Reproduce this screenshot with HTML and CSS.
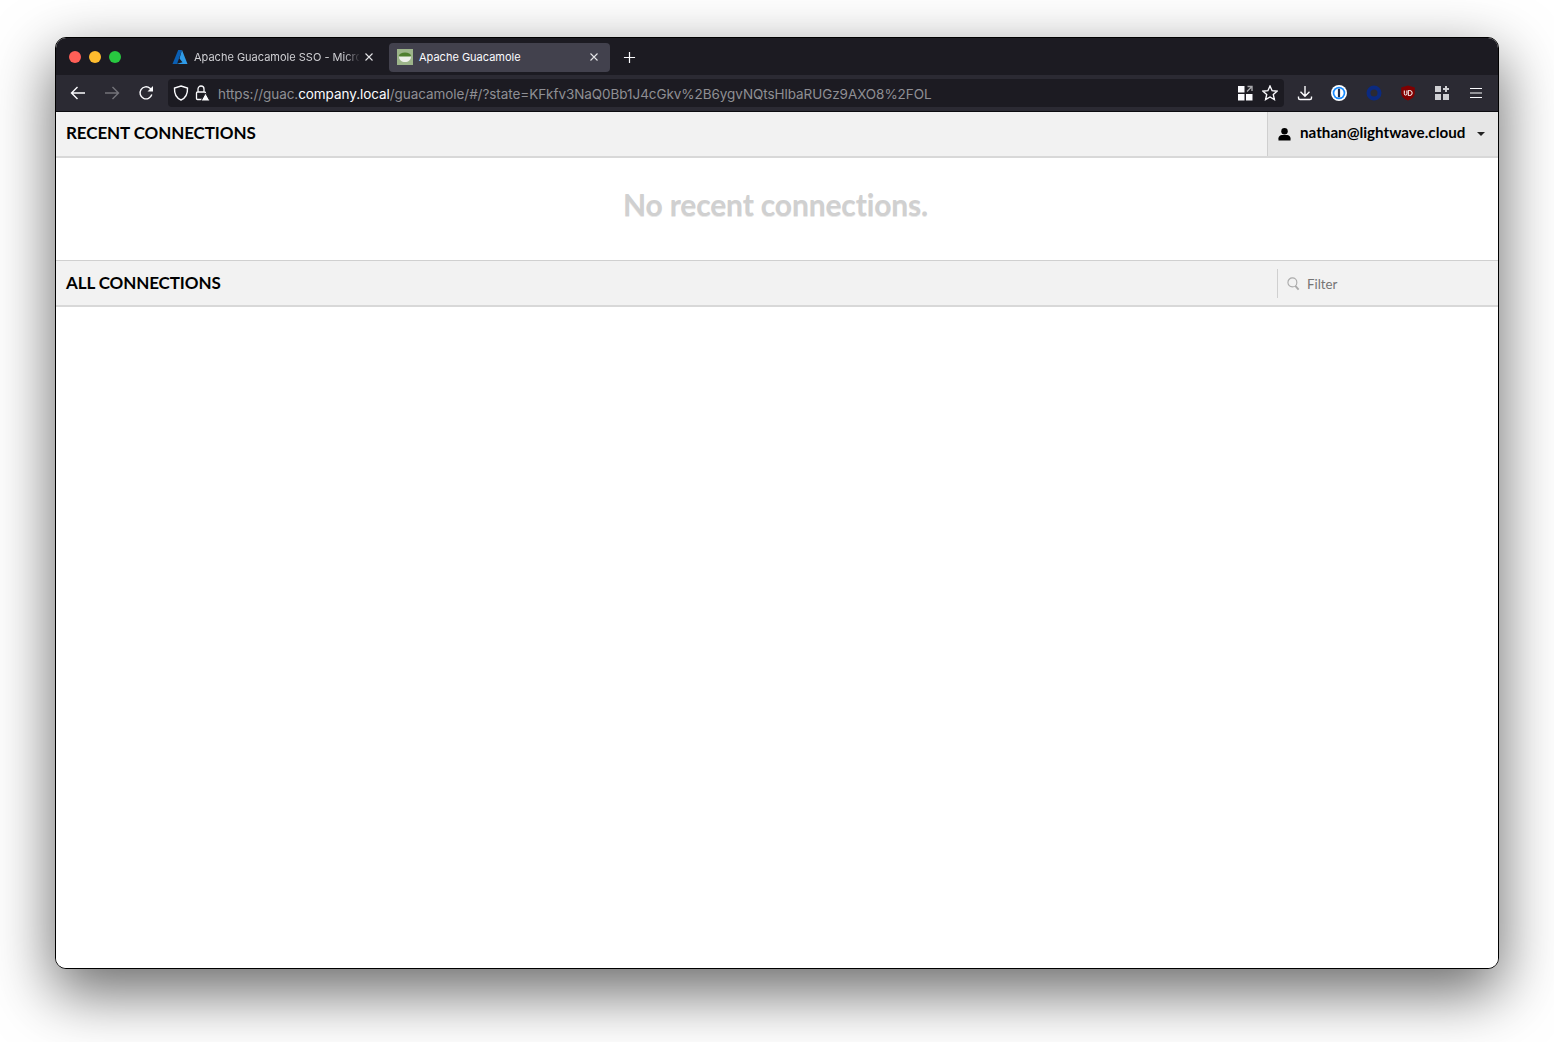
FILE: index.html
```html
<!DOCTYPE html>
<html lang="en">
<head>
<meta charset="utf-8">
<title>Apache Guacamole</title>
<link rel="stylesheet" href="styles.css">
</head>
<body>
<div class="window">
  <div class="tabbar">
    <div class="lights">
      <span class="light red"></span><span class="light yellow"></span><span class="light green"></span>
    </div>
    <div class="tab first">
      <svg class="favicon" viewBox="0 0 16 16"><path d="M6.200 1h3.800L5 15H.5z" fill="#0a5fb4"/><path d="M10 1 15.500 15H4.500l6-1.800-3-3.700z" fill="#2f9be8"/></svg>
      <span class="tab-title fade">Apache Guacamole SSO - Micro</span>
      <svg class="tab-close" viewBox="0 0 10 10"><path d="M1.500 1.500l7 7M8.500 1.500l-7 7"/></svg>
    </div>
    <div class="tab active">
      <svg class="favicon guac" viewBox="0 0 16 16"><rect width="16" height="16" fill="#9db58a"/><ellipse cx="8" cy="6.500" rx="6" ry="3" fill="#4f7f2e"/><path d="M2 7.500h12c0 3.600-2.600 5.500-6 5.500S2 11.100 2 7.500z" fill="#eef0ea"/></svg>
      <span class="tab-title">Apache Guacamole</span>
      <svg class="tab-close" viewBox="0 0 10 10"><path d="M1.500 1.500l7 7M8.500 1.500l-7 7"/></svg>
    </div>
    <svg class="newtab" viewBox="0 0 14 14"><path d="M7 1v12M1 7h12"/></svg>
  </div>
  <div class="toolbar">
    <div class="nav">
      <svg class="ico" viewBox="0 0 16 16"><path d="M15 8H1.500M7.500 2 1.500 8l6 6"/></svg>
      <svg class="ico dim" viewBox="0 0 16 16"><path d="M1 8h13.500M8.500 2l6 6-6 6"/></svg>
      <svg class="ico" viewBox="0 0 16 16"><path d="M13.800 9.500A6 6 0 1 1 12 3.300L14.500 5.500"/><path class="solid" d="M15 1v5.500H9.500z"/></svg>
    </div>
    <div class="urlbar">
      <svg class="ico shield" viewBox="0 0 16 16"><path d="M8 1 14.500 3c.3 6-1.800 10-6.500 12C3.300 13 1.200 9 1.500 3z"/></svg>
      <svg class="ico lock" viewBox="0 0 16 16"><path d="M4 7V4a3 3 0 0 1 6 0V7M3.500 7h7a1 1 0 0 1 1 1v6.500h-8a1 1 0 0 1-1-1V8a1 1 0 0 1 1-1z"/><path class="warn" d="M11.500 8 16 16H7z"/></svg>
      <div class="url"><span>https://guac.</span><span class="host">company.local</span><span>/guacamole/#/?state=KFkfv3NaQ0Bb1J4cGkv%2B6ygvNQtsHlbaRUGz9AXO8%2FOL</span></div>
      <svg class="ico qr" viewBox="0 0 16 16"><path class="solid-w" d="M1 1h6.500v6.500H1zM1 9h6.500v6.500H1zM9 9h6.500v6.500H9z"/><path class="arrow" d="M10 6.500 15 1.500M10.500 1.500H15V6"/></svg>
      <svg class="ico star" viewBox="0 0 16 16"><path d="M8 1l2.100 4.700 5 .5-3.800 3.400 1.100 5L8 12l-4.400 2.600 1.100-5L.9 6.200l5-.5z"/></svg>
    </div>
    <div class="tools">
      <svg class="ico dl" viewBox="0 0 16 16"><path d="M8 1v10M3.500 6.800 8 11.200l4.500-4.400M1.500 11.500v1.500a1.500 1.500 0 0 0 1.500 1.500h10a1.500 1.500 0 0 0 1.500-1.500v-1.500"/></svg>
      <svg class="ext onepass" viewBox="0 0 16 16"><circle cx="8" cy="8" r="8" fill="#fff"/><circle cx="8" cy="8" r="6.300" fill="#1a8cff"/><circle cx="8" cy="8" r="4.600" fill="#fff"/><rect x="6.900" y="3.800" width="2.200" height="8.400" rx=".6" fill="#1a2a4a"/></svg>
      <svg class="ext" viewBox="0 0 16 16"><circle cx="8" cy="8" r="5.500" fill="none" stroke="#0b2a80" stroke-width="4"/></svg>
      <svg class="ext" viewBox="0 0 16 16"><path d="M8 .5 14.800 2.500V8c0 3.800-3.400 6.300-6.800 7.500C4.600 14.300 1.200 11.800 1.200 8V2.500z" fill="#800000"/><path d="M4.300 5.500v3.300a1.300 1.300 0 0 0 2.600 0V5.500M8.300 5.500v5h1.400a2.500 2.500 0 0 0 0-5z" fill="none" stroke="#fff" stroke-width="1"/></svg>
      <svg class="ext" viewBox="0 0 16 16"><path d="M1 1h6v6H1zM1 9h6v6H1zM9 9h6v6H9z" fill="#cfcfd3"/><path d="M12 1v6M9 4h6" stroke="#cfcfd3" stroke-width="2"/></svg>
      <svg class="ico menu" viewBox="0 0 16 16"><path d="M2 3.500h12M2 8h12M2 12.500h12"/></svg>
    </div>
  </div>
  <div class="page">
    <div class="section-head">
      <h2>RECENT CONNECTIONS</h2>
      <div class="user">
        <svg class="user-ico" viewBox="0 0 14 14"><circle cx="7" cy="4" r="3.500"/><path d="M.5 14v-2.500c0-2 2-3.500 3.500-3.500h6c1.500 0 3.500 1.500 3.500 3.500V14z"/></svg>
        <span class="user-name">nathan@lightwave.cloud</span>
        <span class="caret"></span>
      </div>
    </div>
    <div class="empty">No recent connections.</div>
    <div class="section-head second">
      <h2>ALL CONNECTIONS</h2>
      <div class="filter">
        <svg class="search" viewBox="0 0 14 14"><circle cx="5.800" cy="5.800" r="4.800"/><path d="M9 9.500 12.500 13.500" class="handle"/></svg>
        <span class="filter-label">Filter</span>
      </div>
    </div>
    <div class="list"></div>
  </div>
</div>
</body>
</html>
```

FILE: styles.css
```css
* { box-sizing: border-box; }
html, body { margin: 0; height: 100%; }
body {
  background: #fff;
  padding: 37px 55px 73px;
  overflow: hidden;
  font-family: "Inter", "Liberation Sans", sans-serif;
}
.window {
  height: 932px;
  display: flex;
  flex-direction: column;
  border: 1px solid #000;
  border-radius: 11px;
  overflow: hidden;
  background: #fff;
  box-shadow: 0 22px 60px 2px rgba(0, 0, 0, .58);
}
.tabbar {
  height: 37px;
  flex: none;
  display: flex;
  align-items: center;
  background: #1c1b22;
  padding-top: 1px;
}
.lights { display: flex; gap: 8px; padding-left: 13px; width: 106px; flex: none; }
.light { width: 12px; height: 12px; border-radius: 50%; }
.red { background: #ff5f57; }
.yellow { background: #febc2e; }
.green { background: #28c840; }
.tab {
  width: 221px;
  height: 29px;
  flex: none;
  display: flex;
  align-items: center;
  border-radius: 4px;
  padding: 0 11px 0 8px;
  margin-right: 6px;
  color: #cfcfd3;
  font-size: 11px;
}
.tab.first { padding-left: 10px; }
.tab.active { background: #42414d; color: #fbfbfe; }
.favicon { width: 16px; height: 16px; flex: none; margin-right: 6px; }
.tab-title {
  flex: none;
  width: 165px;
  white-space: nowrap;
  margin-right: 5px;
}
.fade {
  -webkit-mask-image: linear-gradient(90deg, #000 150px, transparent 167px);
  mask-image: linear-gradient(90deg, #000 150px, transparent 167px);
}
.tab-close { width: 10px; height: 10px; flex: none; fill: none; stroke: #e3e3e6; stroke-width: 1.100; }
.newtab { width: 13px; height: 13px; margin-left: 7px; fill: none; stroke: #fbfbfe; stroke-width: 1.300; }
.toolbar {
  height: 36px;
  flex: none;
  display: flex;
  align-items: center;
  background: #2b2a33;
}
.ico { width: 16px; height: 16px; flex: none; fill: none; stroke: #fbfbfe; stroke-width: 1.400; }
.ico .solid { fill: #fbfbfe; stroke: none; }
.dim { stroke: #74737a; }
.nav { display: flex; align-items: center; gap: 18px; padding-left: 14px; width: 112px; flex: none; }
.urlbar {
  width: 1116px;
  height: 28px;
  flex: none;
  display: flex;
  align-items: center;
  background: #1c1b22;
  border-radius: 4px;
  padding: 0 6px 0 5px;
}
.shield { margin-right: 5px; }
.lock { margin-right: 8px; stroke-width: 1.300; }
.lock .warn { fill: #fbfbfe; stroke: #1c1b22; stroke-width: 1; }
.url { flex: 1; padding-top: 1px; color: #8f8f94; white-space: nowrap; overflow: hidden; font-size: 13.500px; letter-spacing: -.06px; }
.host { color: #fbfbfe; }
.qr { margin-right: 9px; stroke: none; }
.qr .solid-w { fill: #fbfbfe; }
.qr .arrow { stroke: #a8a8ac; stroke-width: 1.400; fill: none; }
.tools { display: flex; align-items: center; flex: 1; padding-left: 13px; }
.tools > svg { margin-right: 18.300px; }
.ext { width: 16px; height: 16px; flex: none; }
.tools > .menu { stroke-width: 1.200; margin-right: 0; }
.page { flex: 1; display: flex; flex-direction: column; background: #fff; min-height: 0; border-top: 1px solid #0c0c10; }
.section-head {
  height: 46px;
  flex: none;
  display: flex;
  align-items: stretch;
  justify-content: space-between;
  background: #f2f2f2;
  border-bottom: 2px solid #d8d8d8;
}
.section-head.second { border-top: 1px solid #d0d0d0; height: 47px; }
.section-head h2 {
  margin: 0;
  padding: 11px 0 0 10px;
  font: 700 17px/20px "Lato", "Liberation Sans", sans-serif;
  color: #000;
  letter-spacing: -.1px;
}
.section-head.second h2 { padding-top: 12px; }
.user {
  width: 231px;
  display: flex;
  align-items: center;
  background: #e6e6e6;
  border-left: 1px solid #cfcfcf;
  padding: 0 0 4px 10px;
  font: 700 15.200px/20px "Lato", "Liberation Sans", sans-serif;
  color: #000;
}
.user-ico { width: 13px; height: 14px; flex: none; margin: 3px 9px 0 0; fill: #000; }
.user-name { flex: none; }
.caret { width: 0; height: 0; margin: 3px 0 0 12px; border: 4px solid transparent; border-top-color: #222; border-bottom: 0; }
.empty {
  height: 102px;
  flex: none;
  padding: 29px 3px 0 0;
  text-align: center;
  font: 700 30px/34px "Lato", "Liberation Sans", sans-serif;
  color: #d0d0d0;
  text-shadow: 0 1px 0 #e8e8e8;
  letter-spacing: -.15px;
}
.filter {
  width: 221px;
  margin: 8px 0 7px;
  display: flex;
  align-items: center;
  border-left: 1px solid #d0d0d0;
  padding-left: 9px;
}
.search { width: 13px; height: 15px; flex: none; fill: none; stroke: #aaa; stroke-width: 1.200; margin-right: 7px; }
.search .handle { stroke-width: 2; }
.filter-label { font: 400 13.300px/18px "Lato", "Liberation Sans", sans-serif; color: #757575; }
.list { flex: 1; }
```
